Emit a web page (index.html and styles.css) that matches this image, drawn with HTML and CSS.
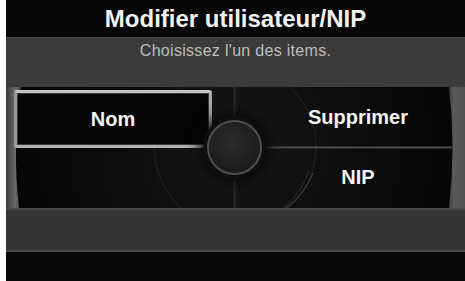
FILE: index.html
```html
<!DOCTYPE html>
<html lang="fr">
<head>
<meta charset="utf-8">
<title>Modifier utilisateur/NIP</title>
<link rel="stylesheet" href="styles.css">
</head>
<body>
<div class="screen">
  <header class="title">Modifier utilisateur/NIP</header>
  <div class="prompt">Choisissez l'un des items.</div>
  <main class="panel">
    <svg class="panel-bg" width="459" height="121" viewBox="0 0 459 121" aria-hidden="true">
      <defs>
        <radialGradient id="glow" cx="229" cy="60" r="230" gradientUnits="userSpaceOnUse">
          <stop offset="0" stop-color="#1a1a1a"/>
          <stop offset="0.5" stop-color="#0c0c0c"/>
          <stop offset="1" stop-color="#050505"/>
        </radialGradient>
        <linearGradient id="bezelL" x1="0" y1="0" x2="1" y2="0">
          <stop offset="0" stop-color="#3a3a3a"/>
          <stop offset="0.6" stop-color="#6a6a6a"/>
          <stop offset="1" stop-color="#3a3a3a"/>
        </linearGradient>
        <linearGradient id="bezelR" x1="0" y1="0" x2="1" y2="0">
          <stop offset="0" stop-color="#2a2a2a"/>
          <stop offset="0.4" stop-color="#5a5a5a"/>
          <stop offset="1" stop-color="#505050"/>
        </linearGradient>
      </defs>
      <rect width="459" height="121" fill="#2e2e2e"/>
      <path d="M0 0 H16 Q4 60 16 121 H0 Z" fill="url(#bezelL)"/>
      <path d="M459 0 H440 Q452 60 440 121 H459 Z" fill="url(#bezelR)"/>
      <path d="M15 0 H443 Q450 60 443 121 H13 Q6 60 15 0 Z" fill="url(#glow)"/>
      <circle cx="229" cy="60" r="81" fill="none" stroke="#1c1c1c" stroke-width="1.5"/>
      <path d="M307 86 A81 81 0 0 1 279 122" fill="none" stroke="#3a3a3a" stroke-width="1.2"/>
      <path d="M303 83 A78 78 0 0 1 276 122" fill="none" stroke="#2e2e2e" stroke-width="1"/>
      <line x1="228.5" y1="0" x2="228.5" y2="121" stroke="#2c2c2c" stroke-width="2"/>
      <line x1="256" y1="60.5" x2="446" y2="60.5" stroke="#4c4c4c" stroke-width="2"/>
    </svg>
    <div class="col-left">
      <button class="item item-selected">Nom</button>
    </div>
    <div class="col-right">
      <button class="item">Supprimer</button>
      <button class="item">NIP</button>
    </div>
    <div class="dial" aria-hidden="true"></div>
  </main>
  <div class="footer"></div>
  <div class="base"></div>
</div>
</body>
</html>
```
FILE: styles.css
```css
html, body {
  margin: 0;
  padding: 0;
  background: #ffffff;
}
body {
  width: 465px;
  height: 281px;
  overflow: hidden;
  font-family: "Liberation Sans", Arial, sans-serif;
}
.screen {
  margin-left: 6px;
  width: 459px;
  height: 281px;
  display: flex;
  flex-direction: column;
  background: #0a0a0a;
}
.title {
  height: 37px;
  flex: none;
  background: #070707;
  color: #f2f2f2;
  font-size: 24px;
  font-weight: bold;
  text-align: center;
  line-height: 38px;
}
.prompt {
  height: 50px;
  flex: none;
  background: #3b3b3b;
  color: #bdbdbd;
  font-size: 16px;
  letter-spacing: 0.3px;
  text-align: center;
  line-height: 25px;
  box-sizing: border-box;
  border-top: 1px solid #4a4a4a;
}
.panel {
  position: relative;
  height: 121px;
  flex: none;
  display: grid;
  grid-template-columns: 228px 1fr;
}
.panel-bg {
  position: absolute;
  left: 0;
  top: 0;
}
.col-left {
  position: relative;
  padding: 3px 0 0 8px;
}
.col-right {
  position: relative;
  display: grid;
  grid-template-rows: 60px 61px;
  padding: 0 7px 0 24px;
}
.item {
  background: transparent;
  border: none;
  padding: 0;
  margin: 0;
  font-family: "Liberation Sans", Arial, sans-serif;
  font-size: 20px;
  font-weight: bold;
  color: #f4f4f4;
  text-align: center;
}
.item-selected {
  width: 198px;
  height: 58px;
  box-sizing: border-box;
  background: #060606;
  border: 3px solid #a8a8a8;
  border-top-color: #c4c4c4;
  border-bottom-color: #b0b0b0;
  border-left-color: #9a9a9a;
  border-radius: 3px;
  box-shadow: inset 0 0 0 1px #3a3a3a;
  line-height: 50px;
}
.dial {
  position: absolute;
  left: 201px;
  top: 33px;
  width: 55px;
  height: 55px;
  box-sizing: border-box;
  border-radius: 50%;
  border: 2px solid #4e4e4e;
  background: radial-gradient(circle at 45% 40%, #2c2c2c 0%, #1e1e1e 60%, #151515 100%);
  box-shadow: 0 0 0 4px #0f0f0f, 0 0 14px 8px #080808;
}
.footer {
  height: 44px;
  flex: none;
  background: #343434;
  box-sizing: border-box;
  border-top: 2px solid #464646;
  border-bottom: 2px solid #4a4a4a;
}
.base {
  flex: 1;
  background: #080808;
}
```
